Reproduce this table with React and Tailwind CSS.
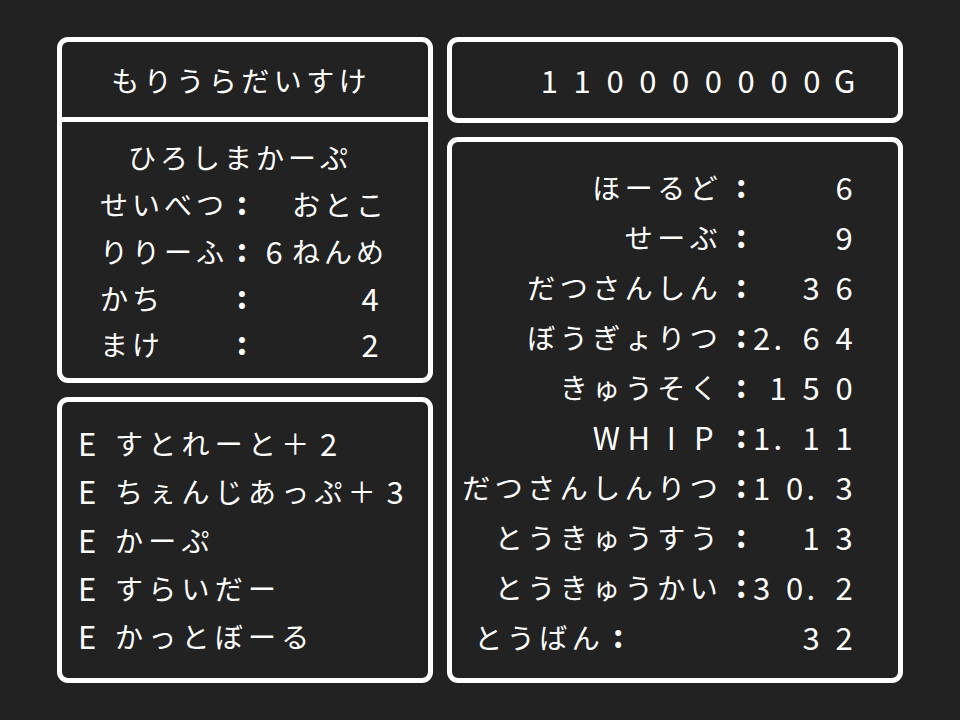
import React from "react";

const isAscii = (c) => /[\x20-\x7e]/.test(c);

function Cells({ text, w }) {
  return (
    <>
      {Array.from(text).map((c, i) => {
        const size =
          c === ":"
            ? "text-[32px] font-bold -translate-y-[3px]"
            : isAscii(c)
            ? "text-[31px]"
            : "text-[28px]";
        return (
          <span key={i} className={`inline-block text-center shrink-0 ${w} ${size}`}>
            {c === " " ? "\u00a0" : c}
          </span>
        );
      })}
    </>
  );
}

const Panel = ({ className = "", children }) => (
  <div className={`border-[5px] border-white rounded-[11px] ${className}`}>{children}</div>
);

const stats = [
  ["ほーるど", ":     6"],
  ["せーぶ", ":     9"],
  ["だつさんしん", ":   3 6"],
  ["ぼうぎょりつ", ":2. 6 4"],
  ["きゅうそく", ": 1 5 0"],
  ["WHIP", ":1. 1 1"],
  ["だつさんしんりつ", ":1 0. 3"],
  ["とうきゅうすう", ":   1 3"],
  ["とうきゅうかい", ":3 0. 2"],
];

const equips = ["すとれーと＋2", "ちぇんじあっぷ＋3", "かーぷ", "すらいだー", "かっとぼーる"];

export default function App() {
  return (
    <div className="w-[960px] h-[720px] bg-[#222222] px-[57px] py-[37px] flex gap-[14px] text-white font-['Noto_Sans_CJK_JP','Noto_Sans',sans-serif]">
      {/* left column */}
      <div className="w-[376px] flex flex-col gap-[14px]">
        <Panel className="h-[346px] flex flex-col">
          <div className="h-[75px] flex items-center pl-[47px] leading-[40px]">
            <Cells text="もりうらだいすけ" w="w-[32.5px]" />
          </div>
          <div className="h-[5px] bg-white" />
          <div className="pt-[12px] pl-[36px] flex flex-col">
            {["　ひろしまかーぷ", "せいべつ:　おとこ", "りりーふ:6ねんめ", "かち　　:　　　4", "まけ　　:　　　2"].map((t, i) => (
              <div key={t} className={`flex h-[46.75px] items-center leading-[46px] ${i === 0 ? "-ml-[4px]" : ""}`}>
                <Cells text={t} w="w-[32px]" />
              </div>
            ))}
          </div>
        </Panel>
        <Panel className="flex-1 pt-[17px] pl-[12px] flex flex-col">
          {equips.map((t) => (
            <div key={t} className="flex h-[48.25px] items-center leading-[48px]">
              <span className="inline-block w-[38.5px] pl-[4px] text-left text-[31px] shrink-0">E</span>
              <Cells text={t} w="w-[33.25px]" />
            </div>
          ))}
        </Panel>
      </div>

      {/* right column */}
      <div className="flex-1 flex flex-col gap-[14px]">
        <Panel className="h-[86px] flex items-center justify-end pr-[37px] leading-[40px]">
          <Cells text="110000000G" w="w-[32.8px]" />
        </Panel>
        <Panel className="flex-1 pt-[20px] flex flex-col">
          {stats.map(([label, val]) => (
            <div key={label} className="flex h-[50px] items-center justify-end pr-[46px] leading-[50px]">
              <Cells text={label} w="w-[32.5px]" />
              <span className="w-[13px] shrink-0" />
              <Cells text={val.slice(0, 1)} w="w-[16.5px]" />
              <span className="w-[3.5px] shrink-0" />
              <Cells text={val.slice(1)} w="w-[16.5px]" />
            </div>
          ))}
          <div className="flex h-[50px] items-center pl-[20px] pr-[46px] leading-[50px]">
            <Cells text="とうばん" w="w-[32.5px]" />
            <span className="ml-[8px] flex">
              <Cells text=":" w="w-[16.5px]" />
            </span>
            <span className="flex-1" />
            <Cells text="3 2" w="w-[16.5px]" />
          </div>
        </Panel>
      </div>
    </div>
  );
}
